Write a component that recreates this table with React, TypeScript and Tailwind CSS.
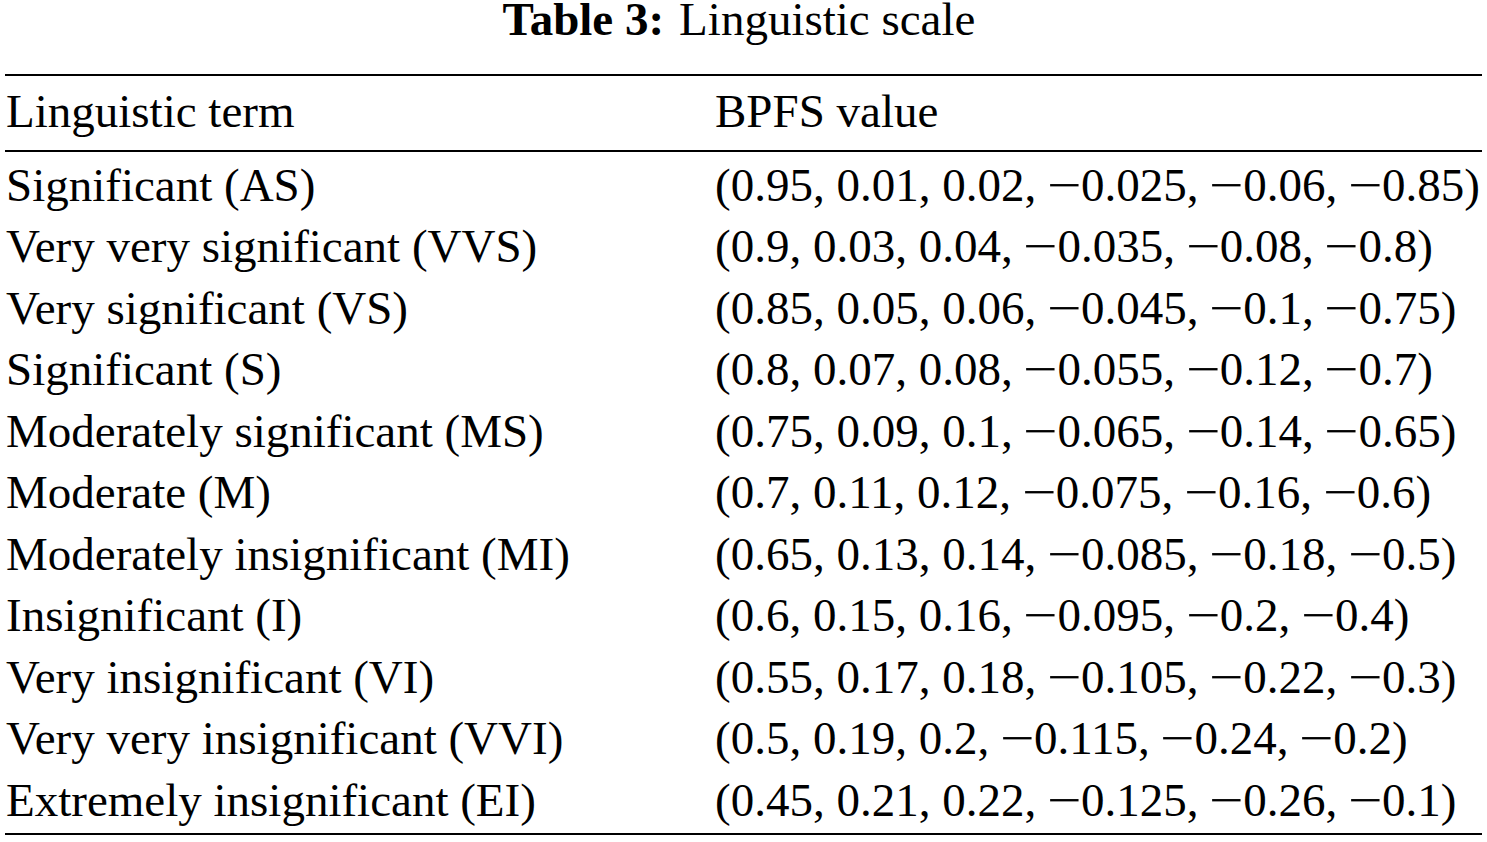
const rows: [string, string][] = [
  ["Significant (AS)", "(0.95, 0.01, 0.02, −0.025, −0.06, −0.85)"],
  ["Very very significant (VVS)", "(0.9, 0.03, 0.04, −0.035, −0.08, −0.8)"],
  ["Very significant (VS)", "(0.85, 0.05, 0.06, −0.045, −0.1, −0.75)"],
  ["Significant (S)", "(0.8, 0.07, 0.08, −0.055, −0.12, −0.7)"],
  ["Moderately significant (MS)", "(0.75, 0.09, 0.1, −0.065, −0.14, −0.65)"],
  ["Moderate (M)", "(0.7, 0.11, 0.12, −0.075, −0.16, −0.6)"],
  ["Moderately insignificant (MI)", "(0.65, 0.13, 0.14, −0.085, −0.18, −0.5)"],
  ["Insignificant (I)", "(0.6, 0.15, 0.16, −0.095, −0.2, −0.4)"],
  ["Very insignificant (VI)", "(0.55, 0.17, 0.18, −0.105, −0.22, −0.3)"],
  ["Very very insignificant (VVI)", "(0.5, 0.19, 0.2, −0.115, −0.24, −0.2)"],
  ["Extremely insignificant (EI)", "(0.45, 0.21, 0.22, −0.125, −0.26, −0.1)"],
];

// the minus in the source is a wide math minus, so give it a bit more room
const Value = ({ text }: { text: string }) => (
  <>
    {text.split("−").map((part, i) => (
      <span key={i}>
        {i > 0 && (
          <span className="inline-block w-[33px] scale-x-[1.3] text-center">
            −
          </span>
        )}
        {part}
      </span>
    ))}
  </>
);

export default function App() {
  return (
    <div className="h-[842px] w-[1487px] bg-white font-['Liberation_Serif',serif] text-black">
      <h1 className="flex justify-center pr-[9px] text-[47px] leading-[38px]">
        <span className="font-bold">Table 3:</span>
        <span className="ml-[15px]">Linguistic scale</span>
      </h1>

      <div className="mx-[5px] mt-[36px] border-y-2 border-black text-[47px] leading-[61.5px]">
        <div className="grid grid-cols-[710px_1fr] border-b-2 border-black pt-[5px] pb-[7px]">
          <div className="pl-[1px]">Linguistic term</div>
          <div>BPFS value</div>
        </div>

        <div className="pt-[3px] pb-[2px]">
          {rows.map(([term, value]) => (
            <div key={term} className="grid grid-cols-[710px_1fr]">
              <div className="pl-[1px]">{term}</div>
              <div className="whitespace-nowrap">
                <Value text={value} />
              </div>
            </div>
          ))}
        </div>
      </div>
    </div>
  );
}
